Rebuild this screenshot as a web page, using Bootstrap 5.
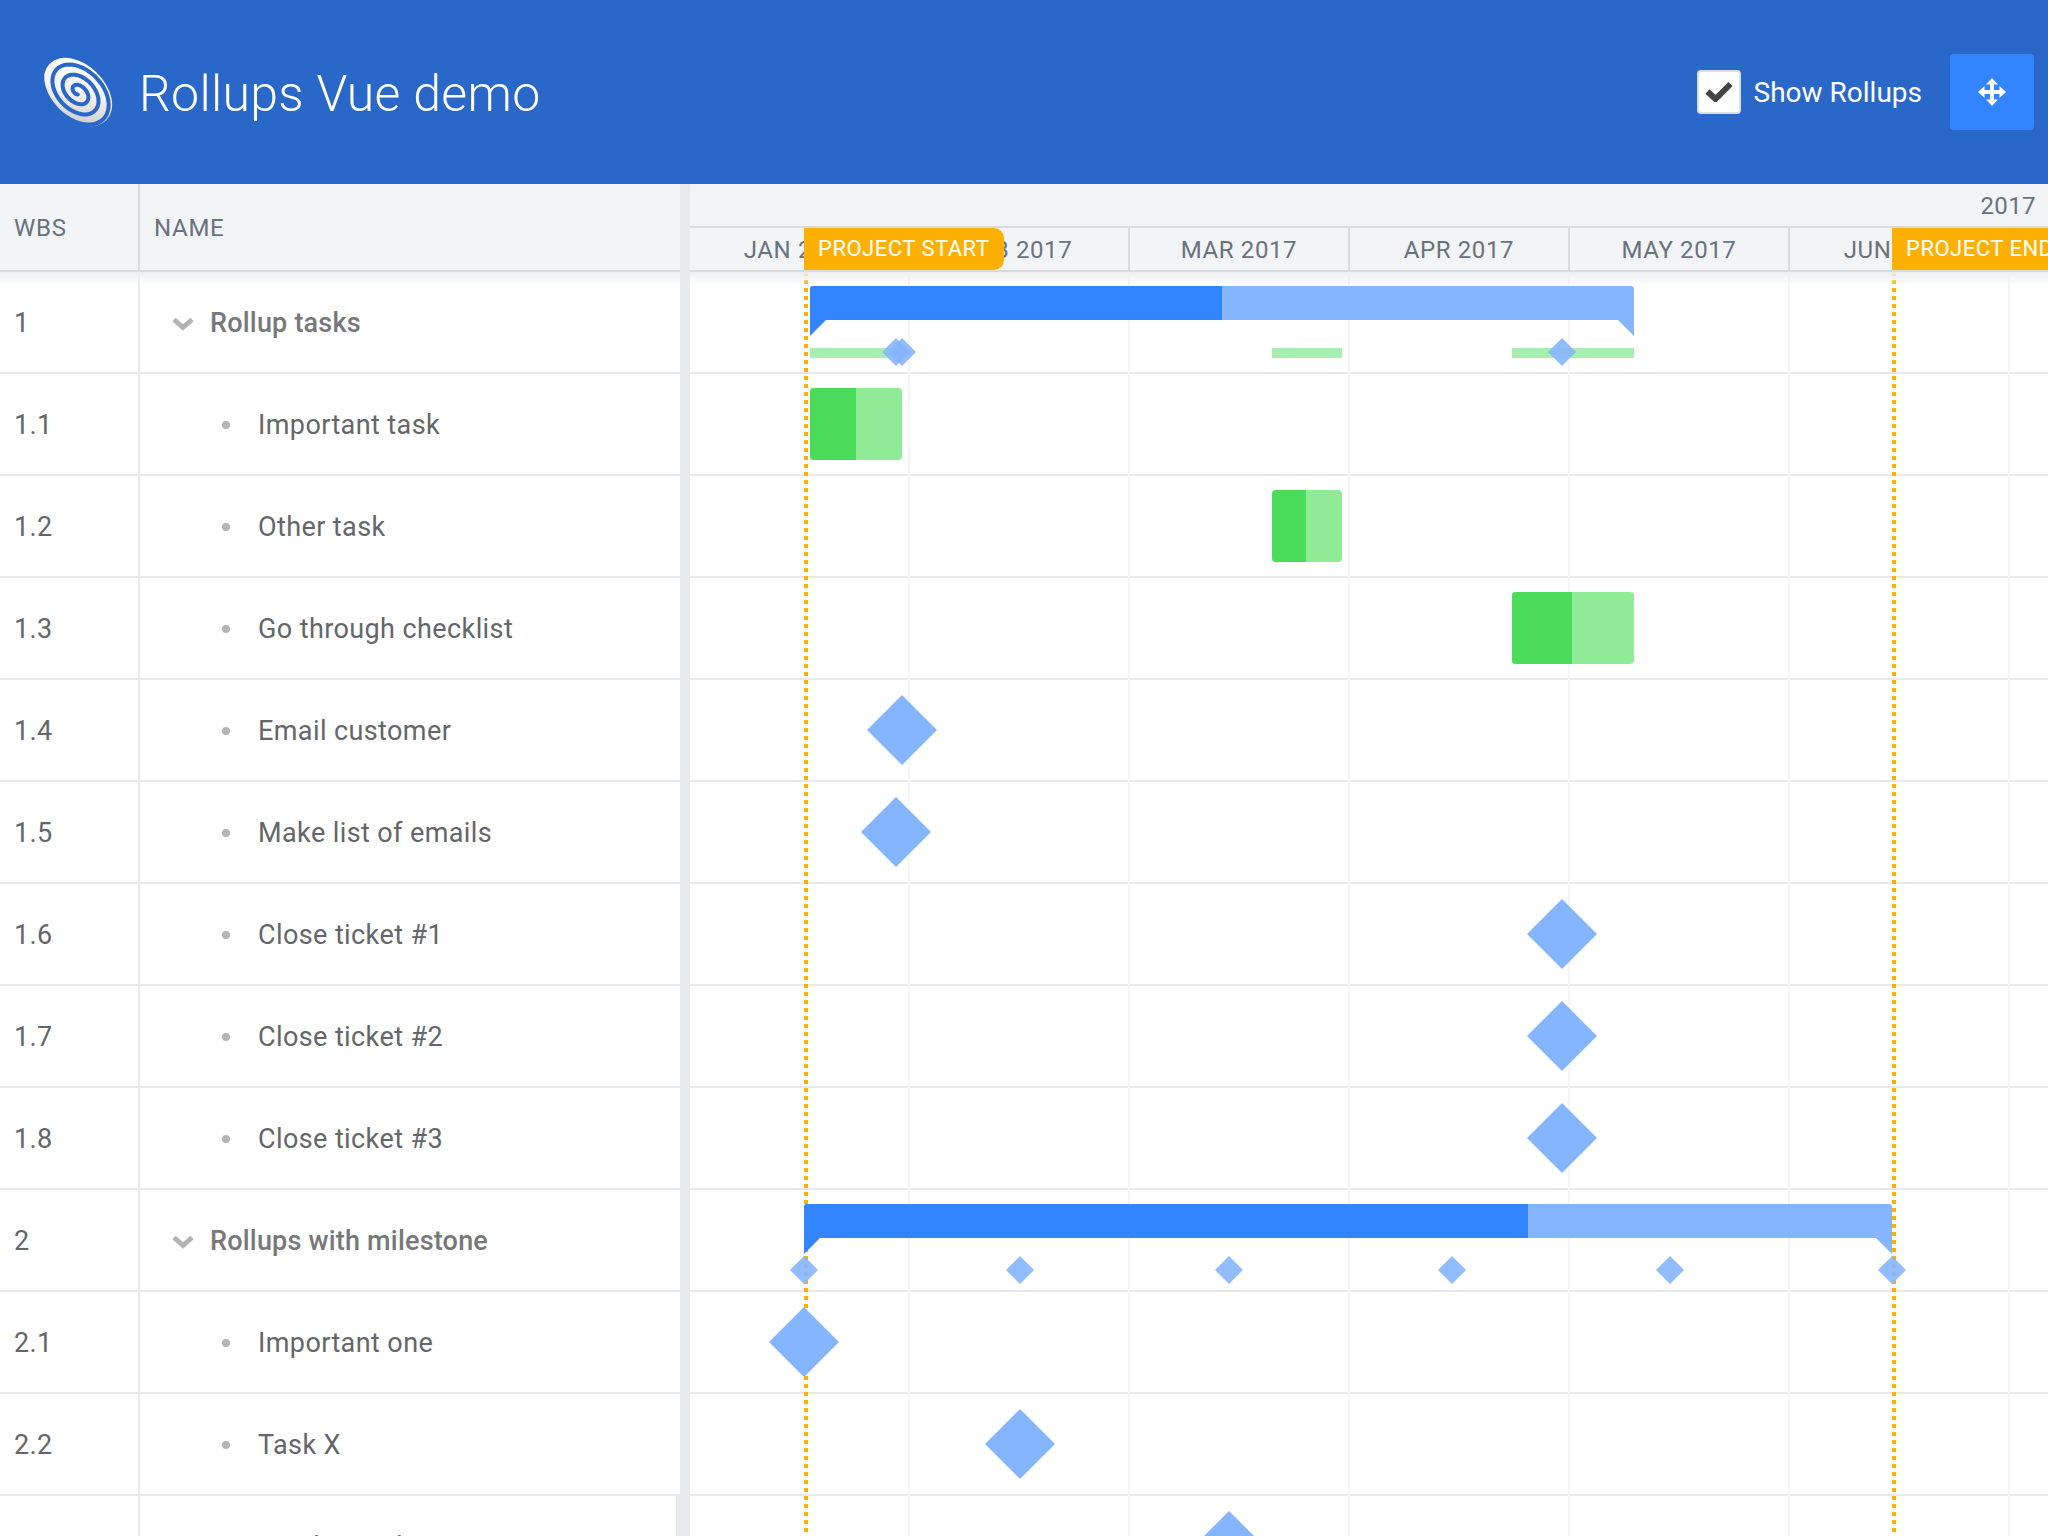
<!DOCTYPE html>
<html lang="en">
<head>
<meta charset="UTF-8">
<title>Rollups Vue demo</title>
<link rel="stylesheet" href="https://cdn.jsdelivr.net/npm/bootstrap@5.3.0/dist/css/bootstrap.min.css">
<style>
html, body { height: 100%; overflow: hidden; }
body { font-family: Roboto, "Liberation Sans", sans-serif; color: #606266; background: #fff; }
.app-header { height: 184px; background: #2968c8; padding: 0 14px 0 42px; }
.app-logo { width: 72px; height: 72px; }
.app-title { font-size: 50px; font-weight: 300; letter-spacing: .3px; color: #fff; margin: 3px 0 0 25px; line-height: 1; }
.rollup-check { margin: 0 13px 0 0; }
.rollup-check .form-check-input { width: 44px; height: 44px; margin: 0; float: none; border: 2px solid #ddd; border-radius: 4px; background-color: #fff; background-image: none; }
.rollup-check .check-mark { position: absolute; left: 8px; top: 11px; width: 28px; height: 21px; pointer-events: none; }
.rollup-label { font-size: 28px; font-weight: 400; color: #fff; padding-top: 2px; }
.move-btn { width: 84px; height: 76px; margin-left: 28px; padding: 0; border: 0; border-radius: 4px; background: #3385ff; }
.move-btn svg { width: 28px; height: 28px; display: block; margin: auto; }
.gantt-wrap { height: 1352px; }
.task-pane { width: 680px; flex: none; position: relative; }
.task-pane::after { content: ""; position: absolute; left: 0; right: 0; top: 88px; height: 14px; background: linear-gradient(#eeeff1, rgba(255,255,255,0)); pointer-events: none; }
.task-table { table-layout: fixed; width: 100%; margin: 0; border-collapse: separate; border-spacing: 0; }
.task-table th { height: 88px; padding: 2px 14px 0; background: #f3f4f6; color: #68737f; font-size: 24px; font-weight: 400; letter-spacing: .7px; border-bottom: 2px solid #d9dadc; vertical-align: middle; }
.task-table th + th { border-left: 2px solid #d9dadc; }
.task-table td { height: 102px; padding: 2px 14px 0; font-size: 27px; font-weight: 400; letter-spacing: .4px; color: #646669; border-bottom: 2px solid #e8e9eb; vertical-align: middle; }
.task-table td + td { border-left: 2px solid #e8e9eb; }
.col-wbs { width: 138px; }
.group-name { font-weight: 500; letter-spacing: .2px; color: #77787a; }
.group-name svg { width: 22px; height: 15px; margin: 0 16px 0 18px; flex: none; }
.leaf-dot { width: 8px; height: 8px; border-radius: 50%; background: #b4b4b4; margin: 0 28px 0 68px; flex: none; }
.pane-split { width: 10px; flex: none; background: #e8e9eb; position: relative; }
.pane-split::after { content: ""; position: absolute; left: -4px; top: 1312px; bottom: 0; width: 4px; background: #e8e9eb; }
.chart-pane { flex: 1 1 0; min-width: 0; position: relative; overflow: hidden; }
.year-row { height: 44px; background: #f3f4f6; border-bottom: 2px solid #d9dadc; color: #68737f; font-size: 24px; font-weight: 400; letter-spacing: .4px; text-align: right; padding-right: 12px; line-height: 45px; }
.month-row { height: 44px; background: #f3f4f6; border-bottom: 2px solid #d9dadc; }
.month-cell { flex: none; width: 220px; border-right: 2px solid #d9dadc; color: #68737f; font-size: 24px; font-weight: 400; letter-spacing: .6px; text-align: center; line-height: 44px; white-space: nowrap; }
.chart-row { height: 102px; border-bottom: 2px solid #e8e9eb; }
.chart-body { position: relative; height: 1264px; }
.head-shadow { position: absolute; left: 0; right: 0; top: 0; height: 14px; background: linear-gradient(#eeeff1, rgba(255,255,255,0)); }
.grid-line { position: absolute; top: 0; bottom: 0; width: 2px; background: #f4f5f6; }
.sum-bar { position: absolute; height: 34px; background: #85b5ff; border-radius: 3px 3px 0 0; }
.sum-bar .done { position: absolute; left: 0; top: 0; bottom: 0; background: #3385ff; border-radius: 3px 0 0 0; }
.sum-bar::before, .sum-bar::after { content: ""; position: absolute; top: 34px; border-top: 16px solid #3385ff; }
.sum-bar::before { left: 0; border-right: 16px solid transparent; }
.sum-bar::after { right: 0; border-top-color: #85b5ff; border-left: 16px solid transparent; }
.task-bar { position: absolute; height: 72px; background: #90eb96; border-radius: 4px; overflow: hidden; }
.task-bar .done { display: block; height: 100%; background: #4cdc5c; }
.roll-strip { position: absolute; height: 10px; background: #aaedb0; }
.mile-stone { position: absolute; background: #85b5ff; transform: translate(-50%, -50%); clip-path: polygon(50% 0, 100% 50%, 50% 100%, 0 50%); }
.mile-stone.big { width: 70px; height: 70px; }
.mile-stone.tiny { width: 28px; height: 28px; opacity: .9; }
.day-line { position: absolute; top: 0; bottom: 0; width: 4px; background: repeating-linear-gradient(#fdb004 0, #fdb004 4px, transparent 4px, transparent 8px); }
.day-flag { position: absolute; top: 44px; height: 42px; background: #fdb004; color: #fff; font-size: 22px; font-weight: 400; letter-spacing: .5px; line-height: 42px; white-space: nowrap; z-index: 2; padding-left: 14px; }
.day-flag.start { left: 114px; width: 200px; border-radius: 0 10px 10px 0; }
.day-flag.finish { left: 1202px; width: 170px; }
</style>
</head>
<body>
<header class="navbar app-header d-flex align-items-center flex-nowrap">
  <div class="d-flex align-items-center">
    <svg class="app-logo" viewBox="0 0 72 72">
      <defs><linearGradient id="swirl" x1="0" y1="0" x2="1" y2="1"><stop offset="0" stop-color="#ffffff"/><stop offset=".5" stop-color="#f4f4f4"/><stop offset="1" stop-color="#bdbdbd"/></linearGradient></defs>
      <ellipse cx="36" cy="36" rx="40" ry="27" fill="url(#swirl)" transform="rotate(45 36 36)"/>
      <path id="logoSpiral" fill="none" stroke="#2968c8" stroke-width="4" stroke-linecap="round"/>
    </svg>
    <h1 class="app-title">Rollups Vue demo</h1>
  </div>
  <div class="d-flex align-items-center">
    <div class="rollup-check form-check p-0 position-relative d-flex align-items-center mb-0">
      <input class="form-check-input" type="checkbox" id="showRollups" checked>
      <svg class="check-mark" viewBox="0 0 28 21"><path d="M2.500 10.500l8 7.500L25.500 3" fill="none" stroke="#444" stroke-width="6"/></svg>
    </div>
    <label class="rollup-label" for="showRollups">Show Rollups</label>
    <button class="btn btn-primary move-btn" type="button" aria-label="Move">
      <svg viewBox="0 0 28 28"><path fill="#fff" d="M14 0L20 6.500H16V12H21.500V8L28 14L21.500 20V16H16V21.500H20L14 28L8 21.500H12V16H6.500V20L0 14L6.500 8V12H12V6.500H8Z"/></svg>
    </button>
  </div>
</header>
<div class="gantt-wrap d-flex">
  <div class="task-pane">
    <table class="task-table">
      <thead><tr><th class="col-wbs">WBS</th><th>NAME</th></tr></thead>
      <tbody id="taskRows"></tbody>
    </table>
  </div>
  <div class="pane-split"></div>
  <div class="chart-pane">
    <div class="year-row">2017</div>
    <div class="month-row d-flex" id="monthRow"></div>
    <div class="day-flag start">PROJECT START</div>
    <div class="day-flag finish">PROJECT END</div>
    <div class="chart-body" id="chartBody"></div>
  </div>
</div>
<script src="https://cdn.jsdelivr.net/npm/bootstrap@5.3.0/dist/js/bootstrap.bundle.min.js"></script>
<script>
// x values are page pixels, y is row index
const CHART_X = 690;
const tasks = [
  { wbs: '1', name: 'Rollup tasks', group: true, bar: [810, 1634, 1222], strips: [[810, 890], [1272, 1342], [1512, 1634]], marks: [896, 902, 1562] },
  { wbs: '1.1', name: 'Important task', task: [810, 902, 856] },
  { wbs: '1.2', name: 'Other task', task: [1272, 1342, 1306] },
  { wbs: '1.3', name: 'Go through checklist', task: [1512, 1634, 1572] },
  { wbs: '1.4', name: 'Email customer', mile: 902 },
  { wbs: '1.5', name: 'Make list of emails', mile: 896 },
  { wbs: '1.6', name: 'Close ticket #1', mile: 1562 },
  { wbs: '1.7', name: 'Close ticket #2', mile: 1562 },
  { wbs: '1.8', name: 'Close ticket #3', mile: 1562 },
  { wbs: '2', name: 'Rollups with milestone', group: true, bar: [804, 1892, 1528], marks: [804, 1020, 1229, 1452, 1670, 1892] },
  { wbs: '2.1', name: 'Important one', mile: 804 },
  { wbs: '2.2', name: 'Task X', mile: 1020 },
  { wbs: '2.3', name: 'Send e-mail', mile: 1229 }
];
const months = ['JAN 2017', 'FEB 2017', 'MAR 2017', 'APR 2017', 'MAY 2017', 'JUN 2017', 'JUL 2017'];

// logo spiral, a few turns on the tilted ellipse
let d = '';
const tilt = 45 * Math.PI / 180;
for (let i = 0; i <= 160; i++) {
  const t = i / 160;
  const a = (150 - 1170 * (1 - t)) * Math.PI / 180;
  const s = 0.08 + 0.97 * t;
  const lx = 40 * s * Math.cos(a);
  const ly = 27 * s * Math.sin(a);
  const x = 36 + lx * Math.cos(tilt) - ly * Math.sin(tilt);
  const y = 36 + lx * Math.sin(tilt) + ly * Math.cos(tilt);
  d += (i ? 'L' : 'M') + x.toFixed(1) + ' ' + y.toFixed(1);
}
document.getElementById('logoSpiral').setAttribute('d', d);

const monthRow = document.getElementById('monthRow');
months.forEach(m => {
  const c = document.createElement('div');
  c.className = 'month-cell';
  c.textContent = m;
  monthRow.appendChild(c);
});

const rows = document.getElementById('taskRows');
const chevron = '<svg viewBox="0 0 22 15"><path d="M2 3.500l9 8 9-8" fill="none" stroke="#b3b3b3" stroke-width="5"/></svg>';
const chart = document.getElementById('chartBody');

function add(cls, left, top, width) {
  const el = document.createElement('div');
  el.className = cls;
  el.style.left = (left - CHART_X) + 'px';
  el.style.top = top + 'px';
  if (width !== undefined) el.style.width = width + 'px';
  chart.appendChild(el);
  return el;
}

tasks.forEach(t => {
  const tr = document.createElement('tr');
  const inner = t.group ? chevron + '<span></span>' : '<i class="leaf-dot"></i><span></span>';
  tr.innerHTML = '<td></td><td><div class="d-flex align-items-center ' + (t.group ? 'group-name' : '') + '">' + inner + '</div></td>';
  tr.children[0].textContent = t.wbs;
  tr.querySelector('span').textContent = t.name;
  rows.appendChild(tr);

  const row = document.createElement('div');
  row.className = 'chart-row';
  chart.appendChild(row);
});

// month grid lines
[908, 1128, 1348, 1568, 1788, 2008].forEach(x => add('grid-line', x, 0));

// project start and end markers, under the bars
add('day-line', 804, 0);
add('day-line', 1892, 0);

tasks.forEach((t, i) => {
  const top = i * 102;
  if (t.strips) t.strips.forEach(s => add('roll-strip', s[0], top + 76, s[1] - s[0]));
  if (t.bar) {
    const bar = add('sum-bar', t.bar[0], top + 14, t.bar[1] - t.bar[0]);
    const done = document.createElement('div');
    done.className = 'done';
    done.style.width = (t.bar[2] - t.bar[0]) + 'px';
    bar.appendChild(done);
  }
  if (t.marks) t.marks.forEach(x => add('mile-stone tiny', x, top + 80));
  if (t.task) {
    const bar = add('task-bar', t.task[0], top + 14, t.task[1] - t.task[0]);
    const done = document.createElement('span');
    done.className = 'done';
    done.style.width = (t.task[2] - t.task[0]) + 'px';
    bar.appendChild(done);
  }
  if (t.mile) add('mile-stone big', t.mile, top + 50);
});

const shadow = document.createElement('div');
shadow.className = 'head-shadow';
chart.appendChild(shadow);
</script>
</body>
</html>
